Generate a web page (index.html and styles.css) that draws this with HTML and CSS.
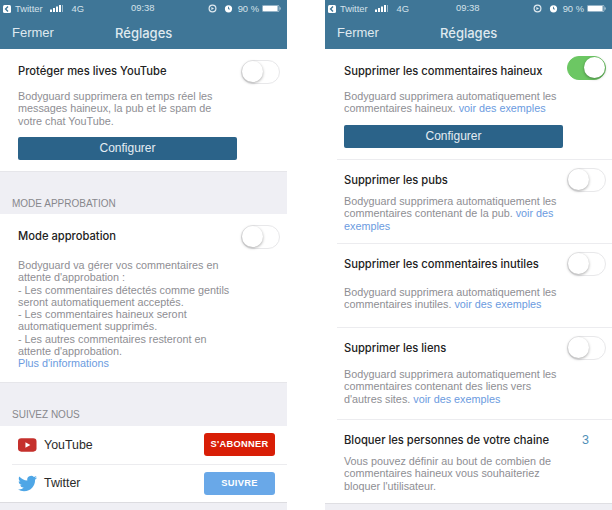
FILE: index.html
```html
<!DOCTYPE html>
<html lang="fr">
<head>
  <meta charset="UTF-8">
  <meta name="viewport" content="width=device-width, initial-scale=1.0">
  <title>Réglages</title>
  <link rel="stylesheet" href="styles.css">
</head>
<body>
  <div class="screens">

    <!-- left phone -->
    <div class="phone">
      <div class="header">
        <div class="status">
          <div class="status-left">
            <svg class="back" viewBox="0 0 8 8"><rect width="8" height="8" rx="1.5" fill="#fff"/><path d="M5 1.6 2.6 4 5 6.4" fill="none" stroke="#3f7697" stroke-width="1.4"/></svg>
            <span>Twitter</span>
            <svg class="signal" viewBox="0 0 13 7"><rect x="0" y="4.5" width="2" height="2.5" fill="#fff"/><rect x="3" y="3" width="2" height="4" fill="#fff"/><rect x="6" y="1.5" width="2" height="5.5" fill="#fff"/><rect x="9" y="0" width="2" height="7" fill="#fff"/><rect x="12" y="0" width="1" height="7" fill="#9db9ca"/></svg>
            <span class="net">4G</span>
          </div>
          <div class="clock">09:38</div>
          <div class="status-right">
            <svg class="ico" viewBox="0 0 9 9"><circle cx="4.5" cy="4.5" r="3.4" fill="none" stroke="#dfe9ef" stroke-width="1.2"/><path d="M3.4 3 6 4.5 3.4 6z" fill="#dfe9ef"/></svg>
            <svg class="ico alarm" viewBox="0 0 9 9"><circle cx="4.5" cy="4.8" r="3.6" fill="#fff"/><path d="M4.5 2.8v2.2h1.4" fill="none" stroke="#3f7697" stroke-width=".9"/></svg>
            <span>90 %</span>
            <svg class="batt" viewBox="0 0 19 7"><rect x=".4" y=".4" width="16.6" height="6.2" rx="1" fill="none" stroke="#c9d9e3" stroke-width=".7"/><rect x="1" y="1" width="14.6" height="5" fill="#fff"/><rect x="17.6" y="2.4" width="1" height="2.2" fill="#c9d9e3"/></svg>
          </div>
        </div>
        <div class="nav">
          <span class="nav-close">Fermer</span>
          <span class="nav-title">Réglages</span>
        </div>
      </div>

      <div class="block live">
        <div class="row-head">
          <div class="row-title">Protéger mes lives YouTube</div>
          <div class="toggle"></div>
        </div>
        <p class="desc">Bodyguard supprimera en temps réel les<br>messages haineux, la pub et le spam de<br>votre chat YouTube.</p>
        <div class="btn-config">Configurer</div>
      </div>

      <div class="section-label first">MODE APPROBATION</div>
      <div class="block approve">
        <div class="row-head">
          <div class="row-title">Mode approbation</div>
          <div class="toggle"></div>
        </div>
        <p class="desc">Bodyguard va gérer vos commentaires en<br>attente d'approbation :<br>- Les commentaires détectés comme gentils<br>seront automatiquement acceptés.<br>- Les commentaires haineux seront<br>automatiquement supprimés.<br>- Les autres commentaires resteront en<br>attente d'approbation.<br><a class="link">Plus d'informations</a></p>
      </div>

      <div class="section-label second">SUIVEZ NOUS</div>
      <div class="social">
        <div class="social-row">
          <svg class="social-icon" viewBox="0 0 20 14"><rect width="19.5" height="14" rx="3.5" fill="#c5302c"/><path d="M7.8 4.2 13 7l-5.2 2.8z" fill="#fff"/></svg>
          <span class="social-name">YouTube</span>
          <div class="btn-follow red">S'ABONNER</div>
        </div>
        <div class="social-row">
          <svg class="social-icon tw" viewBox="0 0 24 24"><path fill="#4ea6e6" d="M23.95 4.57a10 10 0 0 1-2.82.77 4.96 4.96 0 0 0 2.16-2.72c-.95.55-2 .96-3.13 1.18a4.92 4.92 0 0 0-8.38 4.48C7.69 8.1 4.07 6.13 1.64 3.16a4.82 4.82 0 0 0-.67 2.48c0 1.71.87 3.21 2.19 4.1a4.9 4.9 0 0 1-2.23-.62v.06a4.92 4.92 0 0 0 3.95 4.83 5 5 0 0 1-2.21.08 4.94 4.94 0 0 0 4.6 3.42A9.87 9.87 0 0 1 0 19.54a13.94 13.94 0 0 0 7.55 2.21c9.05 0 14-7.5 14-13.98 0-.21 0-.42-.01-.63A9.94 9.94 0 0 0 24 4.59z"/></svg>
          <span class="social-name">Twitter</span>
          <div class="btn-follow blue">SUIVRE</div>
        </div>
      </div>
    </div>

    <!-- right phone -->
    <div class="phone">
      <div class="header">
        <div class="status">
          <div class="status-left">
            <svg class="back" viewBox="0 0 8 8"><rect width="8" height="8" rx="1.5" fill="#fff"/><path d="M5 1.6 2.6 4 5 6.4" fill="none" stroke="#3f7697" stroke-width="1.4"/></svg>
            <span>Twitter</span>
            <svg class="signal" viewBox="0 0 13 7"><rect x="0" y="4.5" width="2" height="2.5" fill="#fff"/><rect x="3" y="3" width="2" height="4" fill="#fff"/><rect x="6" y="1.5" width="2" height="5.5" fill="#fff"/><rect x="9" y="0" width="2" height="7" fill="#fff"/><rect x="12" y="0" width="1" height="7" fill="#9db9ca"/></svg>
            <span class="net">4G</span>
          </div>
          <div class="clock">09:38</div>
          <div class="status-right">
            <svg class="ico" viewBox="0 0 9 9"><circle cx="4.5" cy="4.5" r="3.4" fill="none" stroke="#dfe9ef" stroke-width="1.2"/><path d="M3.4 3 6 4.5 3.4 6z" fill="#dfe9ef"/></svg>
            <svg class="ico alarm" viewBox="0 0 9 9"><circle cx="4.5" cy="4.8" r="3.6" fill="#fff"/><path d="M4.5 2.8v2.2h1.4" fill="none" stroke="#3f7697" stroke-width=".9"/></svg>
            <span>90 %</span>
            <svg class="batt" viewBox="0 0 19 7"><rect x=".4" y=".4" width="16.6" height="6.2" rx="1" fill="none" stroke="#c9d9e3" stroke-width=".7"/><rect x="1" y="1" width="14.6" height="5" fill="#fff"/><rect x="17.6" y="2.4" width="1" height="2.2" fill="#c9d9e3"/></svg>
          </div>
        </div>
        <div class="nav">
          <span class="nav-close">Fermer</span>
          <span class="nav-title">Réglages</span>
        </div>
      </div>

      <div class="list">
        <div class="item item-haine">
          <div class="row-head">
            <div class="row-title">Supprimer les commentaires haineux</div>
            <div class="toggle on"></div>
          </div>
          <p class="desc">Bodyguard supprimera automatiquement les<br>commentaires haineux. <a class="link">voir des exemples</a></p>
          <div class="btn-config">Configurer</div>
        </div>
        <div class="item item-pub">
          <div class="row-head">
            <div class="row-title">Supprimer les pubs</div>
            <div class="toggle"></div>
          </div>
          <p class="desc">Bodyguard supprimera automatiquement les<br>commentaires contenant de la pub. <a class="link">voir des<br>exemples</a></p>
        </div>
        <div class="item item-inutile">
          <div class="row-head">
            <div class="row-title">Supprimer les commentaires inutiles</div>
            <div class="toggle"></div>
          </div>
          <p class="desc">Bodyguard supprimera automatiquement les<br>commentaires inutiles. <a class="link">voir des exemples</a></p>
        </div>
        <div class="item item-liens">
          <div class="row-head">
            <div class="row-title">Supprimer les liens</div>
            <div class="toggle"></div>
          </div>
          <p class="desc">Bodyguard supprimera automatiquement les<br>commentaires contenant des liens vers<br>d'autres sites. <a class="link">voir des exemples</a></p>
        </div>
        <div class="item item-bloquer">
          <div class="row-head">
            <div class="row-title">Bloquer les personnes de votre chaine</div>
            <div class="count">3</div>
          </div>
          <p class="desc">Vous pouvez définir au bout de combien de<br>commentaires haineux vous souhaiteriez<br>bloquer l'utilisateur.</p>
        </div>
      </div>
    </div>

  </div>
</body>
</html>
```

FILE: styles.css
```css
/* General Styling */
body {
  margin: 0;
  background: #fff;
  font-family: 'Liberation Sans', sans-serif;
  color: #222;
}

.screens {
  display: flex;
  justify-content: space-between;
  height: 510px;
  overflow: hidden;
}

.phone {
  width: 287px;
  height: 510px;
  background: #efeff4;
  overflow: hidden;
}

/* Header */
.header {
  height: 49px;
  background: #3f7697;
  color: #fff;
}

.status {
  display: flex;
  justify-content: space-between;
  align-items: center;
  height: 16px;
  padding: 1px 6px 0 3px;
  box-sizing: border-box;
  font-size: 9.4px;
  color: #d5e2ea;
  position: relative;
}

.status-left,
.status-right {
  display: flex;
  align-items: center;
}

.status-left span {
  margin-left: 4px;
}

.back {
  width: 8px;
  height: 8px;
}

.signal {
  width: 13px;
  height: 7px;
  margin-left: 7px;
}

.status-left .net {
  margin-left: 9px;
}

.clock {
  position: absolute;
  left: 131px;
  top: 2px;
  line-height: 12px;
}

.ico {
  width: 9px;
  height: 9px;
  margin-right: 7px;
}

.alarm {
  margin-right: 5px;
}

.batt {
  width: 19px;
  height: 7px;
  margin-left: 3px;
}

.nav {
  display: flex;
  height: 33px;
  align-items: center;
  padding-left: 12px;
  font-size: 13px;
  color: #dfe9ef;
}

.nav-close {
  width: 103px;
}

.nav-title {
  font-family: 'Inter', sans-serif;
  font-weight: 500;
}

/* Rows */
.block {
  background: #fff;
  padding: 0 18px;
}

.live {
  height: 122px;
  box-sizing: border-box;
  padding-top: 11px;
}

.approve {
  height: 168px;
  box-sizing: border-box;
  padding-top: 11px;
}

.row-head {
  display: flex;
  justify-content: space-between;
  align-items: center;
  height: 23px;
}

.row-title {
  padding-bottom: 2px;
  font-family: 'Inter', sans-serif;
  font-size: 11.2px;
  font-weight: 500;
  color: #222;
  white-space: nowrap;
}

.toggle {
  width: 37px;
  height: 22px;
  margin-right: -11px;
  border: 1px solid #e8e8ea;
  border-radius: 12px;
  background: #fff;
  position: relative;
  flex: none;
}

.toggle::after {
  content: "";
  position: absolute;
  left: 0;
  top: 0;
  width: 21px;
  height: 21px;
  border-radius: 50%;
  background: #fff;
  box-shadow: 0 1px 3px rgba(0, 0, 0, 0.35);
}

.toggle.on {
  background: #6cc763;
  border-color: #6cc763;
}

.toggle.on::after {
  left: 16px;
}

.desc {
  margin: 7px 0 0;
  font-size: 10.8px;
  line-height: 12.25px;
  color: #8e8e93;
  white-space: nowrap;
}

.approve .desc {
  margin-top: 11px;
}

.link {
  color: #6b9be0;
}

.btn-config {
  width: 219px;
  height: 23px;
  margin-top: 10px;
  background: #2b6389;
  border-radius: 2px;
  color: #e4edf3;
  font-size: 12px;
  line-height: 23px;
  text-align: center;
}

/* Section labels */
.section-label {
  box-sizing: border-box;
  padding-left: 12px;
  font-size: 10px;
  color: #87878c;
  border-top: 1px solid #e6e6ea;
}

.first {
  height: 43px;
  padding-top: 26px;
}

.second {
  height: 44px;
  padding-top: 26px;
}

/* Social rows */
.social {
  background: #fff;
  border-bottom: 1px solid #dcdce0;
}

.social-row {
  display: flex;
  align-items: center;
  height: 37.5px;
  margin-left: 12px;
  padding-left: 6px;
  padding-right: 12px;
}

.social-row + .social-row {
  border-top: 1px solid #ececef;
}

.social-icon {
  width: 19px;
  height: 14px;
  margin-right: 7px;
  flex: none;
}

.social-icon.tw {
  height: 19px;
}

.social-name {
  flex: 1;
  font-size: 12.4px;
  color: #2a2a2a;
}

.btn-follow {
  width: 71px;
  height: 23px;
  border-radius: 3px;
  color: #fff;
  font-size: 9.3px;
  font-weight: 700;
  line-height: 23px;
  text-align: center;
  letter-spacing: 0.3px;
}

.red {
  background: #d81e06;
}

.blue {
  background: #69a8e8;
}

/* Right list */
.list {
  background: #fff;
  height: 454px;
  border-bottom: 1px solid #dfdfe3;
}

.item {
  box-sizing: border-box;
  margin-left: 12px;
  padding-left: 7px;
  border-bottom: 1px solid #ececef;
}

.item .row-title {
  padding-bottom: 0;
}

.item .toggle {
  margin-right: 6px;
}

.item-haine {
  height: 111px;
  padding-top: 7px;
}

.item-haine .row-title {
  margin-top: 6px;
}

.item-pub {
  height: 84px;
  padding-top: 8px;
}

.item-inutile {
  height: 84px;
  padding-top: 8px;
}

.item-liens {
  height: 92px;
  padding-top: 8px;
}

.item-bloquer {
  height: 83px;
  padding-top: 8px;
  border-bottom: none;
}

.item-haine .desc {
  margin-top: 11px;
}

.item-pub .desc {
  margin-top: 4px;
}

.item-inutile .desc {
  margin-top: 11px;
}

.item-liens .desc {
  margin-top: 9px;
}

.item-bloquer .desc {
  margin-top: 4px;
}

.count {
  margin-right: 23px;
  font-size: 12.5px;
  color: #4f8fb8;
}
```
